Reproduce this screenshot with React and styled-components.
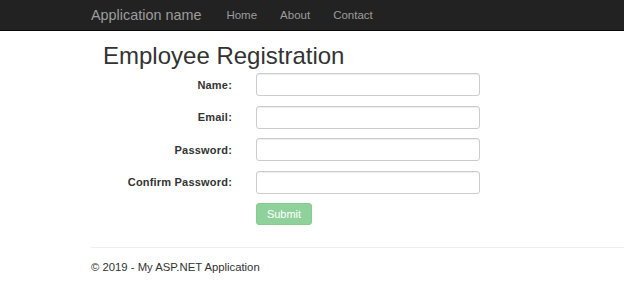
import React from "react";
import styled, { createGlobalStyle } from "styled-components";

const GlobalStyle = createGlobalStyle`
  html, body {
    margin: 0;
    padding: 0;
    background: #fff;
    font-family: "Liberation Sans", Arial, sans-serif;
    color: #333;
  }
  * { box-sizing: border-box; }
`;

const Navbar = styled.nav`
  height: 31px;
  background: #222;
  border-bottom: 1px solid #080808;
  display: flex;
  align-items: center;
  padding-left: 91px;
`;

const Brand = styled.a`
  font-size: 14.4px;
  color: #9d9d9d;
  margin-right: 25px;
  text-decoration: none;
`;

const NavLink = styled.a`
  font-size: 11.5px;
  color: #9d9d9d;
  text-decoration: none;
  margin-right: 23px;
`;

const Container = styled.div`
  padding-left: 91px;
`;

const Title = styled.h2`
  margin: 12px 0 4px 12px;
  font-size: 24px;
  font-weight: 400;
  line-height: 26px;
  color: #333;
`;

const Form = styled.form`
  display: grid;
  grid-template-columns: 141px 224px;
  column-gap: 24px;
  row-gap: 9.5px;
  align-items: center;
`;

const Label = styled.label`
  text-align: right;
  font-size: 11px;
  letter-spacing: 0.2px;
  font-weight: 700;
  color: #333;
`;

const Input = styled.input`
  height: 23px;
  width: 224px;
  border: 1px solid #ccc;
  border-radius: 3px;
  box-shadow: inset 0 1px 1px rgba(0, 0, 0, 0.075);
  padding: 0 8px;
  font-size: 11px;
`;

const SubmitButton = styled.button`
  grid-column: 2;
  justify-self: start;
  width: 56px;
  height: 22px;
  background: #8fd19a;
  border: 1px solid #86cb8f;
  border-radius: 3px;
  color: #fff;
  font-size: 11px;
  font-family: inherit;
  padding: 0;
`;

const Rule = styled.hr`
  margin: 22px 0 0 0;
  border: 0;
  border-top: 1px solid #eee;
`;

const Footer = styled.footer`
  font-size: 11.3px;
  color: #333;
  padding-top: 13px;
`;

const fields = [
  { label: "Name:", type: "text" },
  { label: "Email:", type: "email" },
  { label: "Password:", type: "password" },
  { label: "Confirm Password:", type: "password" },
];

export default function App() {
  return (
    <>
      <GlobalStyle />
      <Navbar>
        <Brand>Application name</Brand>
        <NavLink>Home</NavLink>
        <NavLink>About</NavLink>
        <NavLink>Contact</NavLink>
      </Navbar>
      <Container>
        <Title>Employee Registration</Title>
        <Form onSubmit={(e) => e.preventDefault()}>
          {fields.map((f) => (
            <React.Fragment key={f.label}>
              <Label>{f.label}</Label>
              <Input type={f.type} />
            </React.Fragment>
          ))}
          <SubmitButton disabled>Submit</SubmitButton>
        </Form>
        <Rule />
        <Footer>© 2019 - My ASP.NET Application</Footer>
      </Container>
    </>
  );
}
